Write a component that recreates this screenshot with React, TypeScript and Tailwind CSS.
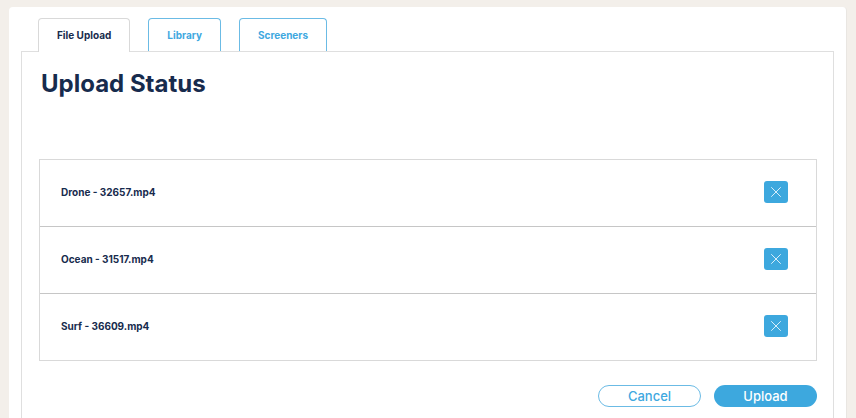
import { useState } from 'react';
import clsx from 'clsx';

const tabs = ['File Upload', 'Library', 'Screeners'];

const initialFiles = ['Drone - 32657.mp4', 'Ocean - 31517.mp4', 'Surf - 36609.mp4'];

const CloseIcon = () => (
  <svg className="w-2.5 h-2.5" viewBox="0 0 10 10" fill="none" stroke="currentColor" strokeWidth="1" strokeLinecap="round" aria-hidden="true">
    <path d="M0.5 0.5 9.5 9.5M9.5 0.5 0.5 9.5" />
  </svg>
);

const App = () => {
  const [activeTab, setActiveTab] = useState('File Upload');
  const [files, setFiles] = useState(initialFiles);

  const removeFile = (name: string) => {
    setFiles(files.filter((file) => file !== name));
  };

  return (
    <div className="min-h-screen flex flex-col bg-[#f3efea] pt-[7px] px-[9px] font-['Inter',sans-serif] text-[#172b4d]">
      <main className="flex-1 flex flex-col bg-white rounded-t border-r border-[#e9e6e2] pt-[11px] px-3">
        <div role="tablist" className="flex gap-[18px] pl-[17px]">
          {tabs.map((tab) => (
            <button
              key={tab}
              role="tab"
              aria-selected={tab === activeTab}
              onClick={() => setActiveTab(tab)}
              className={clsx(
                'px-[18px] pt-2 border border-b-0 rounded-t text-[10px] leading-4 font-bold bg-white',
                tab === activeTab ? 'relative -mb-px pb-[9px] border-[#d9d9d9] text-[#172b4d]' : 'pb-2 border-[#6bbbe5] text-[#40a8df]'
              )}
            >
              {tab}
            </button>
          ))}
        </div>

        <section className="flex-1 border border-b-0 border-[#dfdfdf] pl-[17px] pr-4 pt-4 pb-2.5">
          <h1 className="pl-0.5 text-2xl leading-8 font-bold">Upload Status</h1>

          <ul className="mt-[59px] border border-[#d9d9d9] divide-y divide-[#c6c6c6]">
            {files.map((file) => (
              <li key={file} className="flex items-center justify-between pt-[21px] pb-[23px] pl-[21px] pr-7">
                <span className="text-[10px] leading-4 font-bold">{file}</span>
                <button
                  aria-label={`Remove ${file}`}
                  onClick={() => removeFile(file)}
                  className="w-6 h-[22px] flex items-center justify-center rounded-[3px] bg-[#3da8de] text-[#d8eefa]"
                >
                  <CloseIcon />
                </button>
              </li>
            ))}
          </ul>

          <div className="mt-6 flex justify-end gap-[13px]">
            <button className="w-[103px] h-[22px] rounded-full border border-[#6bbbe5] text-[13px] leading-5 font-medium text-[#40a8df]">
              Cancel
            </button>
            <button className="w-[103px] h-[22px] rounded-full bg-[#3da8de] text-[13px] leading-5 font-medium text-white">
              Upload
            </button>
          </div>
        </section>
      </main>
    </div>
  );
};

export default App;
